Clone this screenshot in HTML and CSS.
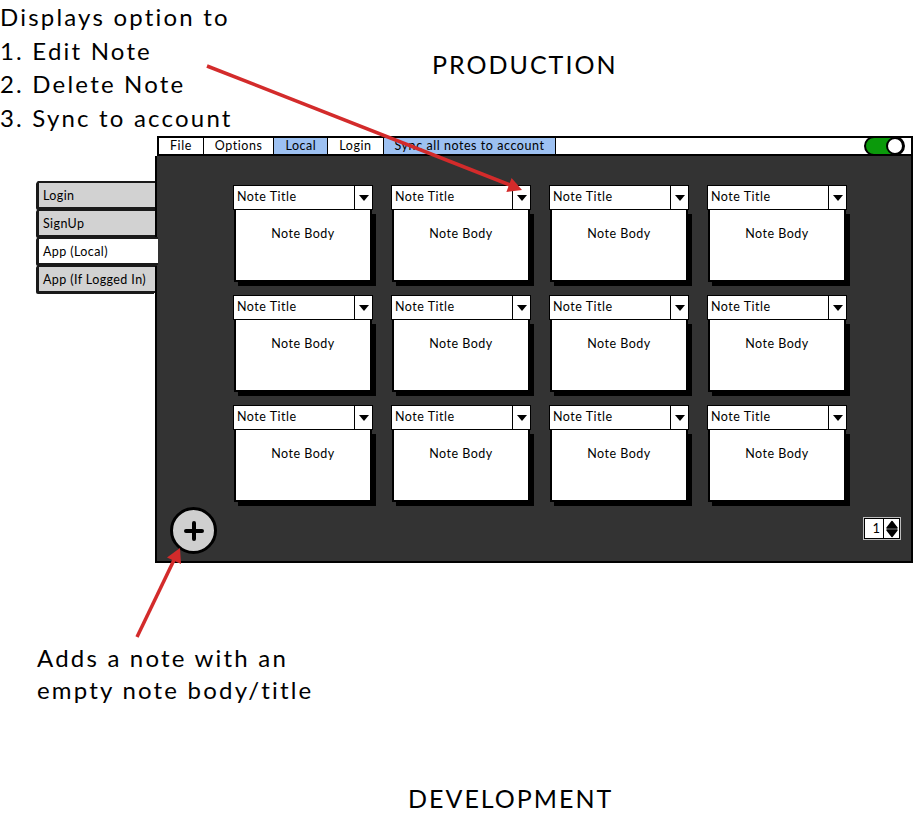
FILE: index.html
```html
<!DOCTYPE html>
<html lang="en">
<head>
<meta charset="utf-8">
<title>Notes mockup</title>
<link rel="stylesheet" href="styles.css">
</head>
<body>
<div class="canvas">
  <header class="top">
    <p class="callout callout-top">Displays option to<br>1. Edit Note<br>2. Delete Note<br>3. Sync to account</p>
    <h1 class="label label-prod">PRODUCTION</h1>
  </header>

  <section class="mockup">
    <nav class="tabs">
      <div class="tab">Login</div>
      <div class="tab">SignUp</div>
      <div class="tab tab-active">App (Local)</div>
      <div class="tab">App (If Logged In)</div>
    </nav>
    <div class="window">
      <div class="menubar">
        <span class="menu-item">File</span>
        <span class="menu-item">Options</span>
        <span class="menu-item menu-sel">Local</span>
        <span class="menu-item">Login</span>
        <span class="menu-item menu-sel">Sync all notes to account</span>
        <span class="menu-fill"><span class="toggle"><span class="knob"></span></span></span>
      </div>
      <div class="panel">
        <div class="notes">
          <div class="note"><div class="note-title"><span class="title-text">Note Title</span><span class="title-btn"><i class="caret"></i></span></div><div class="note-body">Note Body</div></div>
          <div class="note"><div class="note-title"><span class="title-text">Note Title</span><span class="title-btn"><i class="caret"></i></span></div><div class="note-body">Note Body</div></div>
          <div class="note"><div class="note-title"><span class="title-text">Note Title</span><span class="title-btn"><i class="caret"></i></span></div><div class="note-body">Note Body</div></div>
          <div class="note"><div class="note-title"><span class="title-text">Note Title</span><span class="title-btn"><i class="caret"></i></span></div><div class="note-body">Note Body</div></div>
          <div class="note"><div class="note-title"><span class="title-text">Note Title</span><span class="title-btn"><i class="caret"></i></span></div><div class="note-body">Note Body</div></div>
          <div class="note"><div class="note-title"><span class="title-text">Note Title</span><span class="title-btn"><i class="caret"></i></span></div><div class="note-body">Note Body</div></div>
          <div class="note"><div class="note-title"><span class="title-text">Note Title</span><span class="title-btn"><i class="caret"></i></span></div><div class="note-body">Note Body</div></div>
          <div class="note"><div class="note-title"><span class="title-text">Note Title</span><span class="title-btn"><i class="caret"></i></span></div><div class="note-body">Note Body</div></div>
          <div class="note"><div class="note-title"><span class="title-text">Note Title</span><span class="title-btn"><i class="caret"></i></span></div><div class="note-body">Note Body</div></div>
          <div class="note"><div class="note-title"><span class="title-text">Note Title</span><span class="title-btn"><i class="caret"></i></span></div><div class="note-body">Note Body</div></div>
          <div class="note"><div class="note-title"><span class="title-text">Note Title</span><span class="title-btn"><i class="caret"></i></span></div><div class="note-body">Note Body</div></div>
          <div class="note"><div class="note-title"><span class="title-text">Note Title</span><span class="title-btn"><i class="caret"></i></span></div><div class="note-body">Note Body</div></div>
        </div>
        <div class="panel-foot">
          <div class="add-btn">
            <svg width="20" height="20" viewBox="0 0 20 20"><path d="M10 2 V18 M2 10 H18" stroke="#000" stroke-width="4" stroke-linecap="round"/></svg>
          </div>
          <div class="spinner">
            <span class="spin-value">1</span>
            <span class="spin-btn"><svg width="12" height="18" viewBox="0 0 12 18"><path d="M6 1.5 L11 8 H1 Z M1 10 H11 L6 16.5 Z" fill="#000" stroke="#000" stroke-width="1.5" stroke-linejoin="round"/></svg></span>
          </div>
        </div>
      </div>
    </div>
  </section>

  <p class="callout callout-bottom">Adds a note with an<br>empty note body/title</p>
  <h2 class="label label-dev">DEVELOPMENT</h2>

  <svg class="arrows" width="913" height="816" viewBox="0 0 913 816">
    <line x1="207" y1="66" x2="510" y2="185" stroke="#d32b2b" stroke-width="3.5"/>
    <polygon points="522,190 511.6,177.9 506.4,191.9" fill="#d32b2b"/>
    <line x1="137" y1="637" x2="174" y2="560" stroke="#d32b2b" stroke-width="3.5"/>
    <polygon points="180,548 181,564 167,557.6" fill="#d32b2b"/>
  </svg>
</div>
</body>
</html>
```

FILE: styles.css
```css
* { box-sizing: border-box; }

body {
  margin: 0;
  background: #fff;
  font-family: Lato, "Noto Sans", sans-serif;
  color: #000;
}

.canvas {
  position: relative;
  width: 913px;
  height: 816px;
  overflow: hidden;
}

/* ---------- top annotation + heading ---------- */
.top {
  display: flex;
  height: 136px;
}

.callout {
  margin: 0;
  font-size: 24px;
  letter-spacing: 2.2px;
}

.callout-top {
  flex: 0 0 432px;
  line-height: 33.5px;
}

.label {
  margin: 0;
  font-size: 25px;
  font-weight: 400;
  line-height: 28px;
  letter-spacing: 2px;
}

.label-prod {
  margin-top: 50px;
}

/* ---------- mockup ---------- */
.mockup {
  display: flex;
  height: 427px;
}

.tabs {
  width: 118px;
  margin-left: 37px;
  padding-top: 45px;
  display: flex;
  flex-direction: column;
}

.tab {
  height: 28px;
  padding-left: 4px;
  font-size: 12.5px;
  letter-spacing: 0.4px;
  line-height: 25px;
  background: #d2d2d2;
  border: 2px solid #1a1a1a;
  border-right: none;
  border-radius: 2px 0 0 2px;
  box-shadow: -1px 1px 0 #1a1a1a;
}

.tab-active {
  background: #fff;
  margin-right: -3px;
  position: relative;
  z-index: 1;
}

.window {
  width: 758px;
  display: flex;
  flex-direction: column;
}

.menubar {
  height: 20px;
  margin-left: 2px;
  display: flex;
  border-top: 2px solid #000;
  border-bottom: 2px solid #000;
  border-left: 2px solid #000;
  background: #fff;
}

.menu-item {
  padding: 0 11px;
  font-size: 12.5px;
  letter-spacing: 0.55px;
  line-height: 16px;
  border-right: 1.5px solid #000;
  white-space: nowrap;
}

.menu-sel {
  background: #9dc1f2;
}

.menu-fill {
  flex: 1;
  display: flex;
  justify-content: flex-end;
  padding-right: 6px;
  border-right: 2px solid #000;
}

.toggle {
  width: 41px;
  height: 20px;
  margin-top: -2px;
  border: 2px solid #000;
  border-radius: 10px;
  background: #0b9a0b;
  display: flex;
  justify-content: flex-end;
}

.knob {
  width: 18px;
  height: 18px;
  margin-top: -1px;
  margin-right: -1px;
  border: 2px solid #000;
  border-radius: 50%;
  background: #fff;
}

.panel {
  flex: 1;
  background: #333333;
  border: 2px solid #000;
  border-top: none;
  display: flex;
  flex-direction: column;
}

.notes {
  display: grid;
  grid-template-columns: repeat(4, 140px);
  column-gap: 18px;
  row-gap: 13px;
  margin-left: 76px;
  padding-top: 29px;
}

.note-title {
  display: flex;
  height: 25px;
  background: #fff;
  border: 1.5px solid #000;
}

.title-text {
  flex: 1;
  padding-left: 3px;
  font-size: 12.5px;
  letter-spacing: 0.5px;
  line-height: 21px;
  border-right: 1.5px solid #000;
}

.title-btn {
  width: 17px;
  display: flex;
  align-items: center;
  justify-content: center;
}

.caret {
  width: 0;
  height: 0;
  border-left: 5px solid transparent;
  border-right: 5px solid transparent;
  border-top: 6px solid #000;
}

.note-body {
  height: 72px;
  margin: 0 1px;
  background: #fff;
  border: 2px solid #000;
  border-top: none;
  box-shadow: 4px 4px 0 #000;
  text-align: center;
  font-size: 12.5px;
  letter-spacing: 0.5px;
  padding-top: 16px;
}

.panel-foot {
  margin-top: 5px;
  padding: 0 10px 0 13px;
  display: flex;
  align-items: center;
  justify-content: space-between;
}

.add-btn {
  width: 47px;
  height: 47px;
  border-radius: 50%;
  background: #cfcfcf;
  border: 3px solid #000;
  display: flex;
  align-items: center;
  justify-content: center;
}

.spinner {
  display: flex;
  height: 23px;
  margin-top: -4px;
  border: 1px solid #bdbdbd;
  background: #fff;
}

.spin-value {
  width: 19px;
  font-size: 13px;
  line-height: 19px;
  text-align: right;
  padding-right: 3px;
  border: 1.5px solid #000;
  border-right: none;
}

.spin-btn {
  width: 17px;
  border: 1.5px solid #000;
  display: flex;
  align-items: center;
  justify-content: center;
}

/* ---------- bottom annotation ---------- */
.callout-bottom {
  margin-top: 79px;
  margin-left: 37px;
  line-height: 32px;
}

.label-dev {
  margin-top: 78px;
  margin-left: 408px;
}

.arrows {
  position: absolute;
  left: 0;
  top: 0;
  pointer-events: none;
}
```
